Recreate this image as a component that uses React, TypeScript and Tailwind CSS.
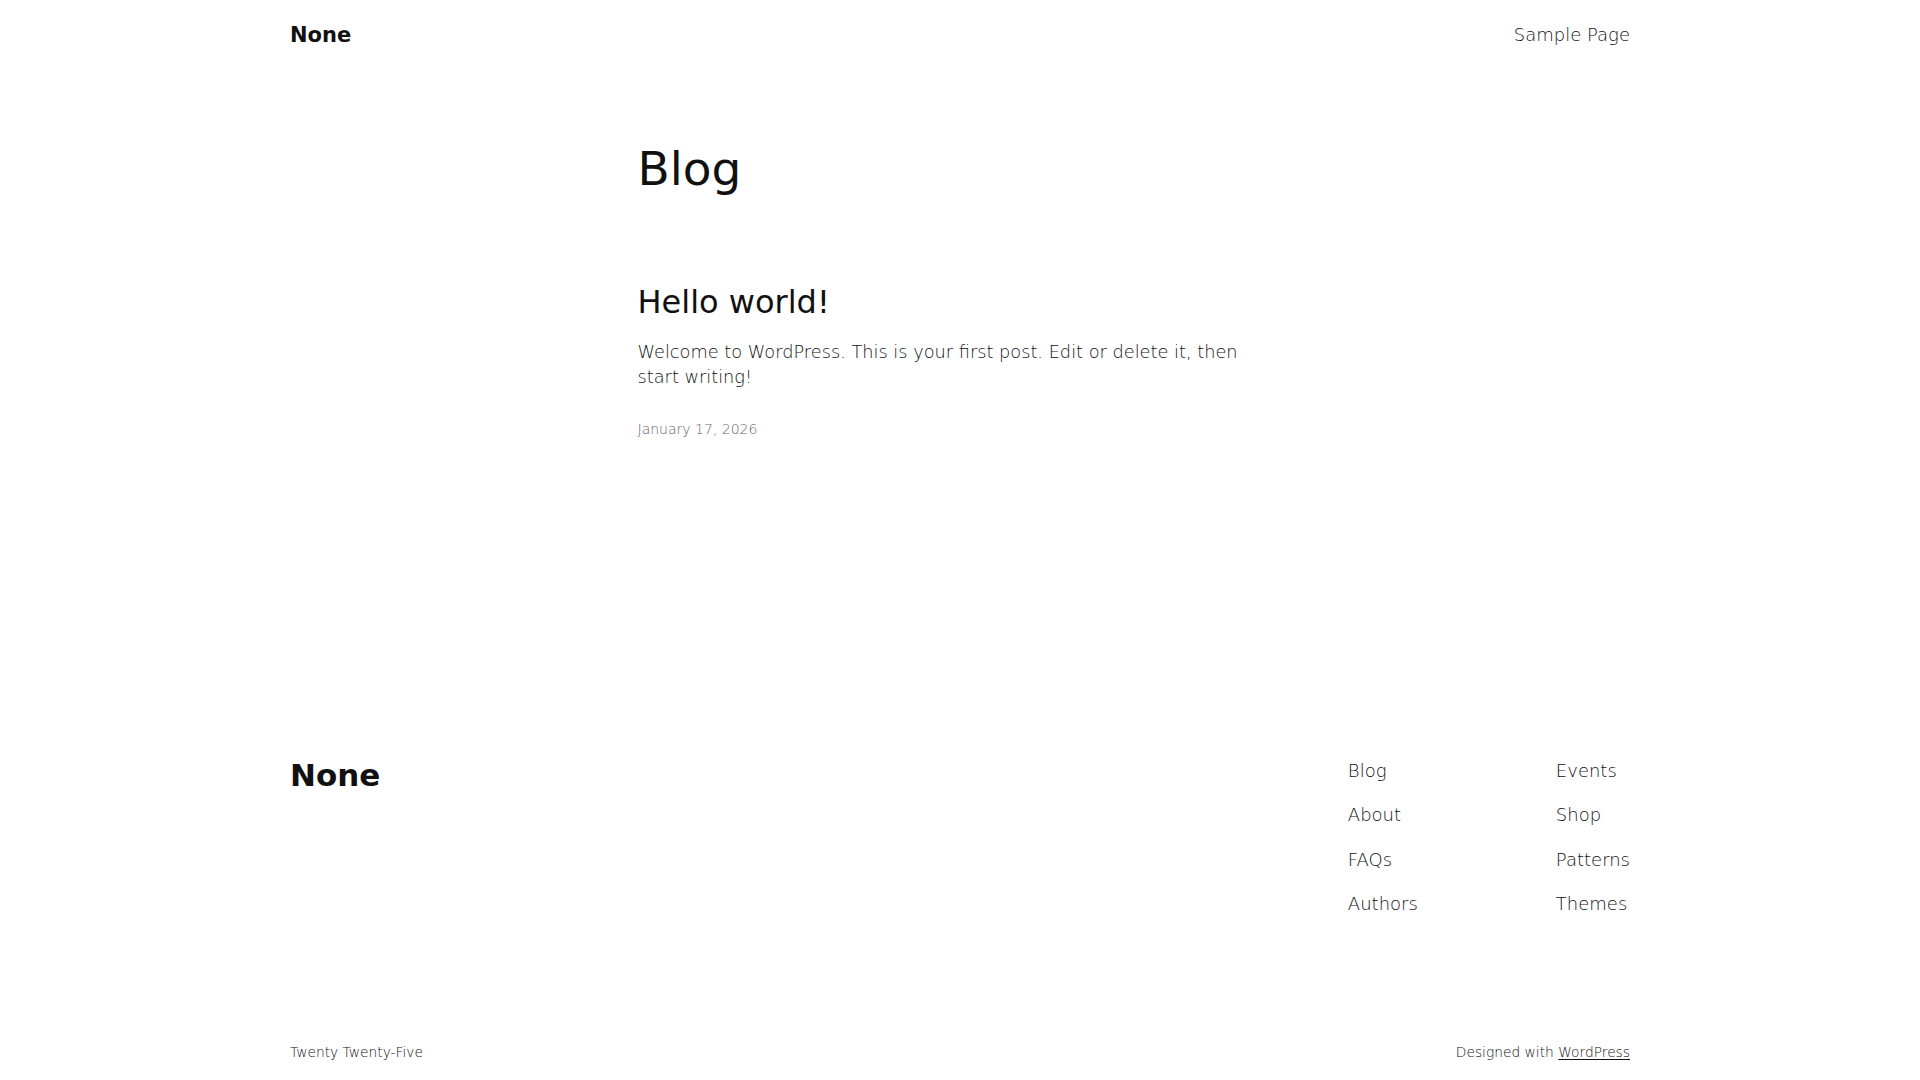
export default function App() {
  const col1 = ['Blog', 'About', 'FAQs', 'Authors'];
  const col2 = ['Events', 'Shop', 'Patterns', 'Themes'];

  return (
    <div className="min-h-screen bg-white text-[#111111] font-['DejaVu_Sans',sans-serif] font-light">
      <div className="w-[1340px] mx-auto">
        {/* Header */}
        <header className="h-[69px] flex items-center justify-between">
          <a className="mt-[2px] text-[21px] leading-[21px] font-bold">None</a>
          <nav className="mt-[1px] text-[18px] leading-[18px] font-light">
            <a>Sample Page</a>
          </nav>
        </header>

        {/* Main */}
        <main className="w-[645px] mx-auto">
          <h1 className="mt-[76px] text-[47px] leading-[47px] font-normal">Blog</h1>

          <article className="mt-[94px]">
            <h2 className="text-[32px] leading-[32px] font-normal">Hello world!</h2>
            <p className="mt-[22px] text-[17.75px] leading-[25px] font-light">
              Welcome to WordPress. This is your first post. Edit or delete it, then start writing!
            </p>
            <div className="mt-[32px] text-[14px] leading-[14px] text-[#686868] font-light">
              January 17, 2026
            </div>
          </article>
        </main>

        {/* Footer */}
        <footer className="mt-[324px]">
          <div className="flex items-start justify-between">
            <div className="text-[31px] leading-[30px] font-bold">None</div>
            <nav className="flex mt-[2px] text-[18px] leading-[18px] font-light">
              <ul className="w-[208px] flex flex-col gap-[26.4px]">
                {col1.map((item) => (
                  <li key={item}>{item}</li>
                ))}
              </ul>
              <ul className="flex flex-col gap-[26.4px]">
                {col2.map((item) => (
                  <li key={item}>{item}</li>
                ))}
              </ul>
            </nav>
          </div>

          <div className="mt-[132px] pb-[40px] flex justify-between text-[13.8px] leading-[14px] font-light">
            <span>Twenty Twenty-Five</span>
            <span>
              Designed with <a className="underline underline-offset-2">WordPress</a>
            </span>
          </div>
        </footer>
      </div>
    </div>
  );
}
